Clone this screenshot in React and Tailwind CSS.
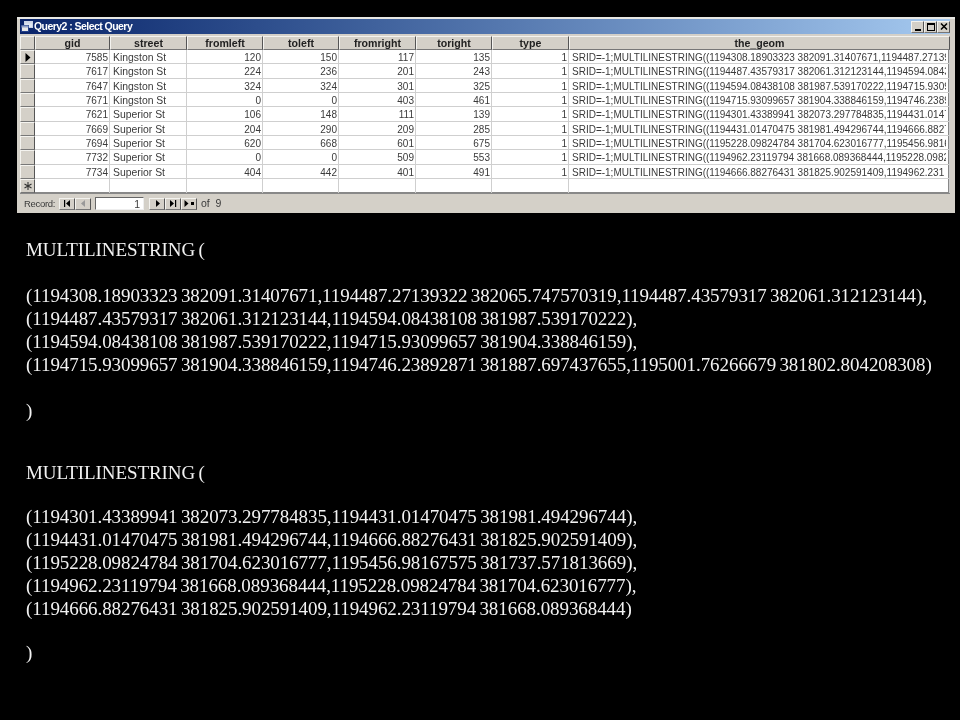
const cols = "grid grid-cols-[15px_75px_77px_76px_76px_77px_76px_77px_381px] grid-rows-1";

const rows = [
  [7585, "Kingston St", 120, 150, 117, 135, "1194308.18903323 382091.31407671,1194487.27139"],
  [7617, "Kingston St", 224, 236, 201, 243, "1194487.43579317 382061.312123144,1194594.0843"],
  [7647, "Kingston St", 324, 324, 301, 325, "1194594.08438108 381987.539170222,1194715.9309"],
  [7671, "Kingston St", 0, 0, 403, 461, "1194715.93099657 381904.338846159,1194746.2389"],
  [7621, "Superior St", 106, 148, 111, 139, "1194301.43389941 382073.297784835,1194431.0147"],
  [7669, "Superior St", 204, 290, 209, 285, "1194431.01470475 381981.494296744,1194666.8827"],
  [7694, "Superior St", 620, 668, 601, 675, "1195228.09824784 381704.623016777,1195456.9816"],
  [7732, "Superior St", 0, 0, 509, 553, "1194962.23119794 381668.089368444,1195228.0982"],
  [7734, "Superior St", 404, 442, 401, 491, "1194666.88276431 381825.902591409,1194962.231"],
];

const headers = ["gid", "street", "fromleft", "toleft", "fromright", "toright", "type", "the_geom"];

const raised = "border border-t-[#f4f3ef] border-l-[#f4f3ef] border-r-[#555] border-b-[#777] bg-[#d4d0c8]";

function NavButton({ children }) {
  return (
    <div className={`w-[16px] h-[12px] flex items-center justify-center ${raised}`}>
      {children}
    </div>
  );
}

function Cell({ children, right, street, geom }) {
  return (
    <div className={`h-full min-w-0 whitespace-nowrap border-r border-b border-[#cfcfcf] pt-[2px] leading-[12px] ${right ? "text-right pr-[1px]" : geom ? "pl-[3px] pr-[3px]" : "pl-[3px]"} ${street ? "text-[10.4px]" : "text-[10px]"}`}>
      <div className="overflow-hidden">{children}</div>
    </div>
  );
}

function Selector({ children }) {
  return (
    <div className={`h-full flex items-center justify-center ${raised}`}>{children}</div>
  );
}

function Line({ children, className = "" }) {
  return <p className={`h-[23px] leading-[23px] whitespace-nowrap ${className}`}>{children}</p>;
}

export default function App() {
  return (
    <div className="w-[960px] h-[720px] overflow-hidden bg-black pt-[17px] pl-[17px]">
      <div className="w-[938px] h-[196px] bg-[#d4d0c8] border-t-2 border-[#e8e8e4] pl-[3px] pr-[5px] font-['Liberation_Sans',Arial,sans-serif] text-[10px] leading-[13px] text-[#3a3a3a] blur-[0.35px]">
        <div className="h-[15px] flex items-center justify-between pl-[1px] bg-gradient-to-r from-[#0a246a] to-[#a6caf0]">
          <div className="flex items-center text-white font-bold text-[10.5px] tracking-[-0.55px]">
            <svg width="12" height="11" viewBox="0 0 12 11">
              <rect x="3.5" y="0.5" width="8" height="6" fill="#dfe6f2" stroke="#c8d2e8" />
              <rect x="3.5" y="0.5" width="8" height="2" fill="#cfd7e8" />
              <rect x="0.5" y="4.5" width="7" height="6" fill="#e8e8e8" stroke="#23408a" />
              <rect x="0.5" y="4.5" width="7" height="2" fill="#8fa0c8" />
            </svg>
            <span className="ml-[1px]">Query2 : Select Query</span>
          </div>
          <div className="flex items-center">
            <div className={`w-[13px] h-[12px] flex items-end justify-center pb-[1px] ${raised}`}>
              <div className="w-[6px] h-[2px] bg-black" />
            </div>
            <div className={`w-[13px] h-[12px] flex items-center justify-center ${raised}`}>
              <div className="w-[8px] h-[8px] border border-t-2 border-black" />
            </div>
            <div className={`w-[13px] h-[12px] flex items-center justify-center ${raised}`}>
              <svg width="8" height="7" viewBox="0 0 8 7">
                <path d="M1 0.5 L7 6.5 M7 0.5 L1 6.5" stroke="#000" strokeWidth="1.5" fill="none" />
              </svg>
            </div>
          </div>
        </div>

        <div className="mt-[2px] h-[158px] bg-white border-r-2 border-b-2 border-[#888]">
          <div className={`${cols} h-[14px]`}>
            <Selector />
            {headers.map((h) => (
              <div key={h} className={`flex items-center justify-center font-bold text-[10.6px] text-[#222] ${raised}`}>{h}</div>
            ))}
          </div>
          {rows.map((r, i) => (
            <div key={r[0]} className={`${cols} h-[14.33px]`}>
              <Selector>
                {i === 0 && (
                  <svg width="6" height="9" viewBox="0 0 6 9"><path d="M0.5 0 L5.5 4.5 L0.5 9 Z" fill="#000" /></svg>
                )}
              </Selector>
              <Cell right>{r[0]}</Cell>
              <Cell street>{r[1]}</Cell>
              <Cell right>{r[2]}</Cell>
              <Cell right>{r[3]}</Cell>
              <Cell right>{r[4]}</Cell>
              <Cell right>{r[5]}</Cell>
              <Cell right>1</Cell>
              <Cell geom>SRID=-1;MULTILINESTRING(({r[6]}</Cell>
            </div>
          ))}
          <div className={`${cols} h-[14px]`}>
            <Selector>
              <svg width="8" height="8" viewBox="0 0 8 8">
                <path d="M4 0v8M0.5 2L7.5 6M7.5 2L0.5 6" stroke="#333" strokeWidth="1.1" fill="none" />
              </svg>
            </Selector>
            {headers.map((h) => (
              <div key={h} className="border-r border-[#cfcfcf]" />
            ))}
          </div>
        </div>

        <div className="h-[19px] flex items-center pl-[4px] text-[10.5px]">
          <span className="w-[35px] whitespace-nowrap text-[9.5px] tracking-[-0.3px]">Record:</span>
          <NavButton>
            <svg width="8" height="7" viewBox="0 0 8 7"><path d="M1 0v7h1.2V0z M7 0 L3 3.5 L7 7Z" fill="#000" /></svg>
          </NavButton>
          <NavButton>
            <svg width="5" height="7" viewBox="0 0 5 7"><path d="M4 0 L0 3.5 L4 7Z" fill="#999" /></svg>
          </NavButton>
          <div className="ml-[4px] w-[49px] h-[13px] bg-white border border-t-[#666] border-l-[#666] border-r-[#eee] border-b-[#eee] text-right pr-[3px] leading-[12px]">1</div>
          <div className="ml-[5px] flex">
            <NavButton>
              <svg width="5" height="7" viewBox="0 0 5 7"><path d="M1 0 L5 3.5 L1 7Z" fill="#000" /></svg>
            </NavButton>
            <NavButton>
              <svg width="8" height="7" viewBox="0 0 8 7"><path d="M1 0 L5 3.5 L1 7Z M6 0h1.2v7H6z" fill="#000" /></svg>
            </NavButton>
            <NavButton>
              <svg width="11" height="7" viewBox="0 0 11 7"><path d="M0.5 0 L4.5 3.5 L0.5 7Z M7 2h3v3H7z" fill="#000" /></svg>
            </NavButton>
          </div>
          <span className="ml-[4px]">of&nbsp; 9</span>
        </div>
      </div>

      <div className="mt-[25px] ml-[9px] font-['Liberation_Serif','Times_New_Roman',serif] text-[19px] text-[#f2f2f2] tracking-[-0.08px] [word-spacing:-1.3px] blur-[0.25px]">
        <Line>MULTILINESTRING (</Line>
        <Line className="mt-[23px]">(1194308.18903323 382091.31407671,1194487.27139322 382065.747570319,1194487.43579317 382061.312123144),</Line>
        <Line>(1194487.43579317 382061.312123144,1194594.08438108 381987.539170222),</Line>
        <Line>(1194594.08438108 381987.539170222,1194715.93099657 381904.338846159),</Line>
        <Line>(1194715.93099657 381904.338846159,1194746.23892871 381887.697437655,1195001.76266679 381802.804208308)</Line>
        <Line className="mt-[23px]">)</Line>
        <Line className="mt-[39px]">MULTILINESTRING (</Line>
        <Line className="mt-[21px]">(1194301.43389941 382073.297784835,1194431.01470475 381981.494296744),</Line>
        <Line>(1194431.01470475 381981.494296744,1194666.88276431 381825.902591409),</Line>
        <Line>(1195228.09824784 381704.623016777,1195456.98167575 381737.571813669),</Line>
        <Line>(1194962.23119794 381668.089368444,1195228.09824784 381704.623016777),</Line>
        <Line>(1194666.88276431 381825.902591409,1194962.23119794 381668.089368444)</Line>
        <Line className="mt-[21px]">)</Line>
      </div>
    </div>
  );
}
